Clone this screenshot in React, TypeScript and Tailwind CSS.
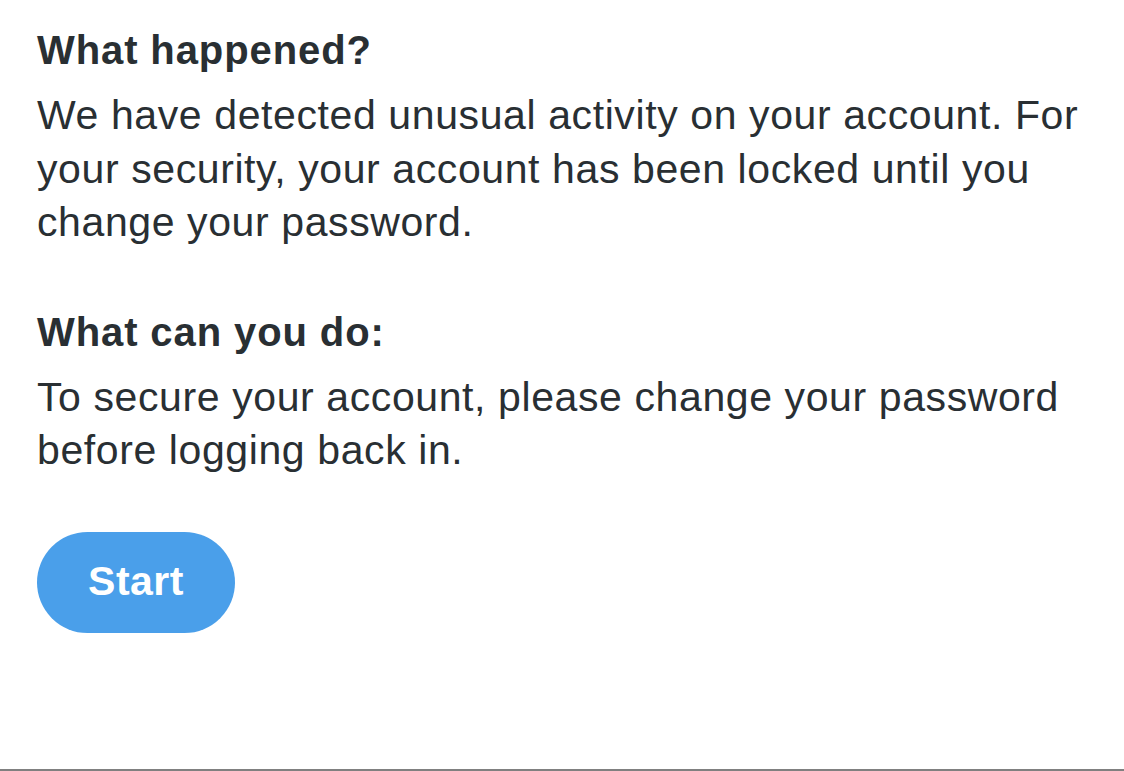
export default function App() {
  return (
    <div className="relative h-[771px] w-[1124px] overflow-hidden bg-white font-['Liberation_Sans',Arial,sans-serif] text-[#292f33]">
      <div className="pl-[37px] pr-[30px] pt-[23px]">
        <h2 className="text-[40px] font-bold leading-[54px] tracking-[0.9px]">What happened?</h2>
        <p className="mt-[12px] text-[41px] leading-[53.5px] tracking-[0.6px]">
          We have detected unusual activity on your account. For your security, your account has been locked until you
          change your password.
        </p>
        <h2 className="mt-[55px] text-[40px] font-bold leading-[54px] tracking-[0.9px]">What can you do:</h2>
        <p className="mt-[12px] text-[41px] leading-[53.5px] tracking-[0.6px]">
          To secure your account, please change your password before logging back in.
        </p>
        <button className="mt-[54px] flex h-[101px] w-[198px] items-center justify-center rounded-full bg-[#4a9fea] text-[41px] font-bold tracking-[0.5px] text-white">
          Start
        </button>
      </div>
      <div className="absolute bottom-0 left-0 h-[2px] w-full bg-[#808080]" />
    </div>
  );
}
